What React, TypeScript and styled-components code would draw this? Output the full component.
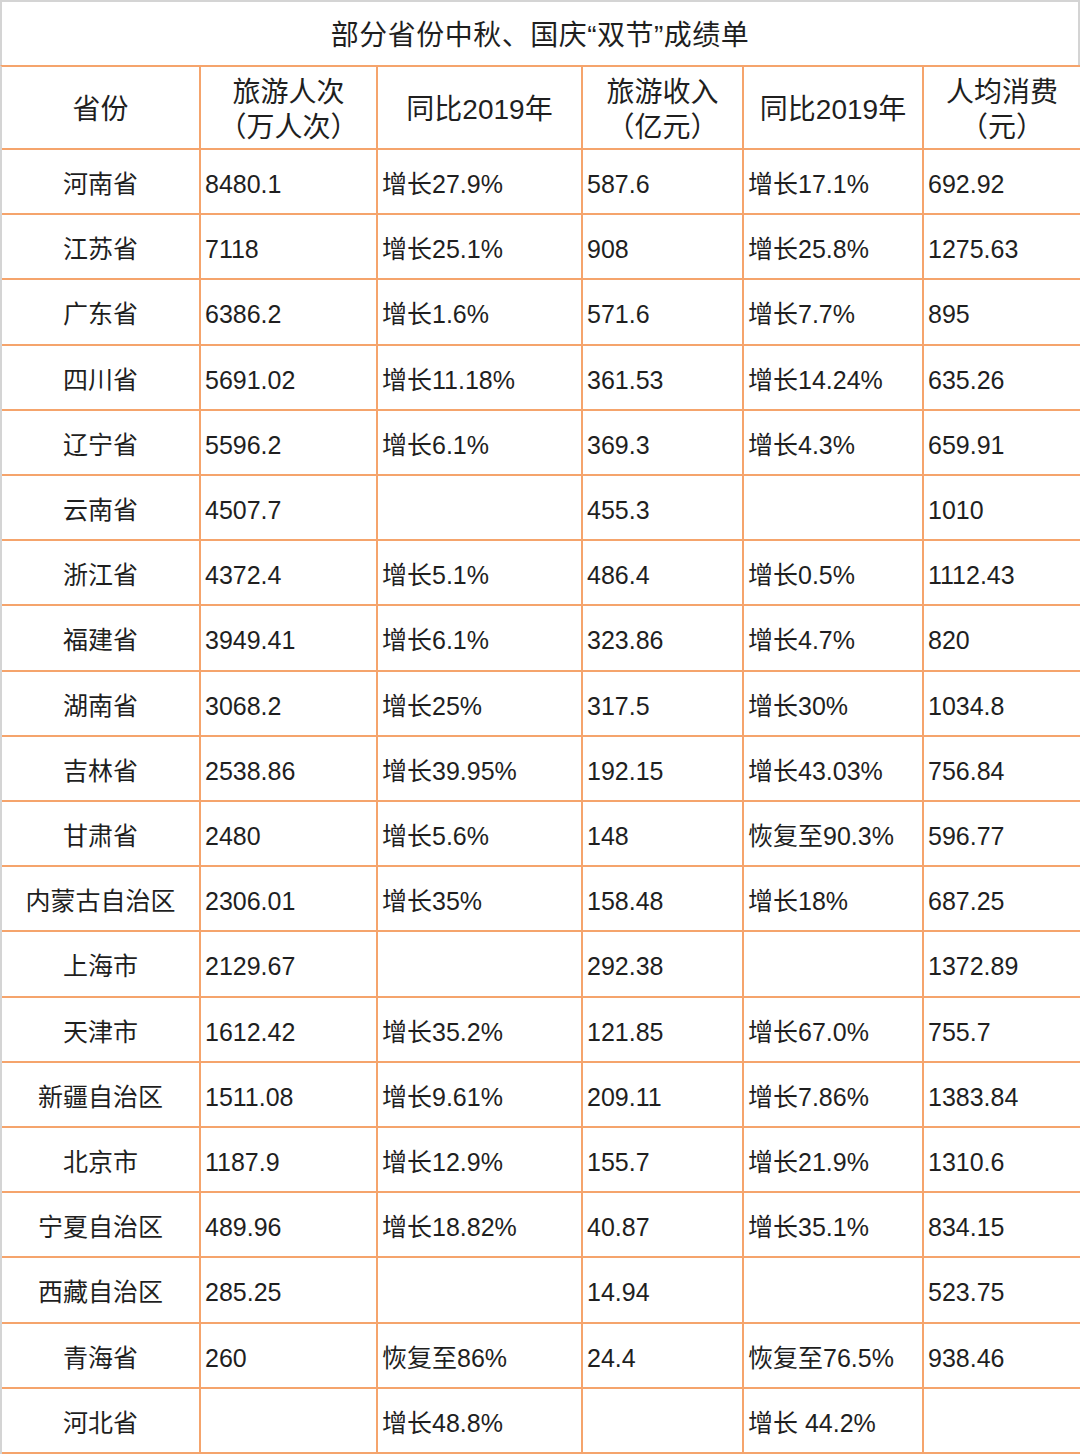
import React from 'react';
import styled, {createGlobalStyle} from 'styled-components';

type Row = [string, string, string, string, string, string];

const rows: Row[] = [
    ['河南省', '8480.1', '增长27.9%', '587.6', '增长17.1%', '692.92'],
    ['江苏省', '7118', '增长25.1%', '908', '增长25.8%', '1275.63'],
    ['广东省', '6386.2', '增长1.6%', '571.6', '增长7.7%', '895'],
    ['四川省', '5691.02', '增长11.18%', '361.53', '增长14.24%', '635.26'],
    ['辽宁省', '5596.2', '增长6.1%', '369.3', '增长4.3%', '659.91'],
    ['云南省', '4507.7', '', '455.3', '', '1010'],
    ['浙江省', '4372.4', '增长5.1%', '486.4', '增长0.5%', '1112.43'],
    ['福建省', '3949.41', '增长6.1%', '323.86', '增长4.7%', '820'],
    ['湖南省', '3068.2', '增长25%', '317.5', '增长30%', '1034.8'],
    ['吉林省', '2538.86', '增长39.95%', '192.15', '增长43.03%', '756.84'],
    ['甘肃省', '2480', '增长5.6%', '148', '恢复至90.3%', '596.77'],
    ['内蒙古自治区', '2306.01', '增长35%', '158.48', '增长18%', '687.25'],
    ['上海市', '2129.67', '', '292.38', '', '1372.89'],
    ['天津市', '1612.42', '增长35.2%', '121.85', '增长67.0%', '755.7'],
    ['新疆自治区', '1511.08', '增长9.61%', '209.11', '增长7.86%', '1383.84'],
    ['北京市', '1187.9', '增长12.9%', '155.7', '增长21.9%', '1310.6'],
    ['宁夏自治区', '489.96', '增长18.82%', '40.87', '增长35.1%', '834.15'],
    ['西藏自治区', '285.25', '', '14.94', '', '523.75'],
    ['青海省', '260', '恢复至86%', '24.4', '恢复至76.5%', '938.46'],
    ['河北省', '', '增长48.8%', '', '增长 44.2%', ''],
];

const headers: string[][] = [
    ['省份'],
    ['旅游人次', '（万人次）'],
    ['同比2019年'],
    ['旅游收入', '（亿元）'],
    ['同比2019年'],
    ['人均消费', '（元）'],
];

const colWidths = [199, 177, 205, 161, 180, 158];

const GlobalStyle = createGlobalStyle`
  html, body {
    margin: 0;
    padding: 0;
    background: #fff;
  }
  body {
    font-family: "Liberation Sans", "Noto Sans CJK SC", sans-serif;
    color: #1f1f1f;
  }
`;

const Sheet = styled.div`
  width: 1080px;
  height: 1454px;
  box-sizing: border-box;
  border-left: 2px solid #d4d4d4;
  display: flex;
  flex-direction: column;
`;

const Title = styled.div`
  height: 65px;
  box-sizing: border-box;
  border-top: 2px solid #d4d4d4;
  border-right: 2px solid #d4d4d4;
  display: flex;
  align-items: center;
  justify-content: center;
  padding-top: 4px;
  font-size: 28px;
  line-height: 34px;
  letter-spacing: 0.5px;
`;

const Grid = styled.div`
  display: grid;
  grid-template-columns: ${colWidths.map(w => `${w}px`).join(' ')};
  grid-template-rows: 83px repeat(20, 1fr);
  flex: 1;
  margin-left: -2px;
  border-top: 2px solid #f5a46c;
  border-left: 2px solid transparent;
`;

const Cell = styled.div<{ $center?: boolean }>`
  box-sizing: border-box;
  border-right: 2px solid #f5a46c;
  border-bottom: 2px solid #f5a46c;
  display: flex;
  align-items: center;
  justify-content: ${p => (p.$center ? 'center' : 'flex-start')};
  padding: 5px 0 0 ${p => (p.$center ? '0' : '4px')};
  font-size: 25px;
  line-height: 30px;
  white-space: nowrap;
  overflow: hidden;
`;

const HeadCell = styled(Cell)`
  flex-direction: column;
  justify-content: center;
  align-items: center;
  font-size: 28px;
  line-height: 35px;
  padding: 4px 0 0;
`;

const App: React.FC = () => {
    return (
        <>
            <GlobalStyle/>
            <Sheet>
                <Title>部分省份中秋、国庆“双节”成绩单</Title>
                <Grid>
                    {headers.map((h, i) => (
                        <HeadCell key={`h${i}`} $center>
                            {h.map(line => <span key={line}>{line}</span>)}
                        </HeadCell>
                    ))}
                    {rows.map((r, ri) =>
                        r.map((v, ci) => (
                            <Cell key={`${ri}-${ci}`} $center={ci === 0}>{v}</Cell>
                        ))
                    )}
                </Grid>
            </Sheet>
        </>
    );
};

export default App;
